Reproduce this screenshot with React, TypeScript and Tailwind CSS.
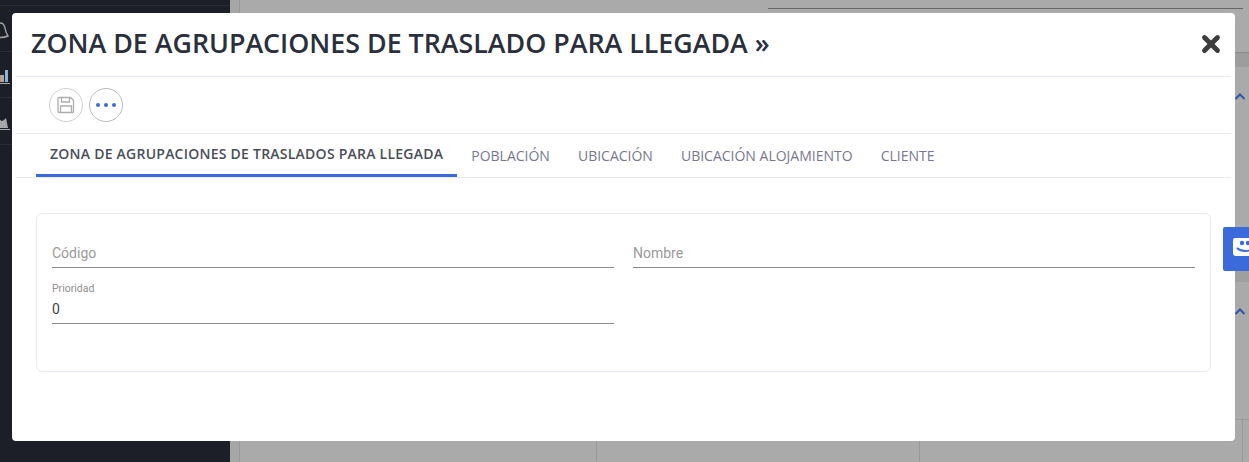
import { X } from 'lucide-react';

const tabs = ['POBLACIÓN', 'UBICACIÓN', 'UBICACIÓN ALOJAMIENTO', 'CLIENTE'];

function Field({ label, value, className }: { label: string; value?: string; className?: string }) {
  return (
    <div className={`relative h-[56px] border-b border-[#8c8c8c] font-['Roboto',sans-serif] ${className ?? ''}`}>
      {value ? (
        <>
          <div className="pt-[14px] text-[10.5px] leading-[14px] text-[#8f8f8f]">{label}</div>
          <div className="mt-[3px] text-sm leading-[20px] text-[#444]">{value}</div>
        </>
      ) : (
        <div className="pt-[31px] text-sm leading-[20px] text-[#9a9a9a]">{label}</div>
      )}
    </div>
  );
}

function Background() {
  return (
    <div className="flex h-[462px] w-[1249px] overflow-hidden bg-[#aaaaaa]">
      <aside className="w-[230px] shrink-0 bg-[#1c1f27]">
        <div className="mt-[5px] h-[47px] border-y border-[#2a2d36]" />
        <div className="h-[46px] border-b border-[#2a2d36]" />
        <div className="h-[47px] border-b border-[#2a2d36]" />
      </aside>
      <div className="w-[9px] shrink-0 bg-[#a6a6a6]" />
      <main className="flex h-full flex-1 flex-col border-l border-[#999]">
        <div className="ml-[528px] mr-[6px] mt-[8px] h-px bg-[#666]" />
        <div className="mt-[43px] h-[15px] border-t border-[#8a8a8a] bg-[#9d9d9d]" />
        <div className="mt-[204px] h-[11px] bg-[#9f9f9f]" />
        <div className="mt-[137px] flex flex-1 border-t border-[#999]">
          <div className="w-[357px] border-r border-[#999]" />
          <div className="w-[323px] border-r border-[#999]" />
          <div className="w-[323px] border-r border-[#999]" />
        </div>
      </main>
    </div>
  );
}

export default function App() {
  return (
    <div className="relative h-[462px] w-[1249px] overflow-hidden">
      <Background />

      {/* sidebar icons peeking out from behind the modal */}
      <svg className="absolute left-0 top-[20px]" width="12" height="20" viewBox="0 0 12 20" fill="none" stroke="#a3a3a3" strokeWidth="1.4">
        <path d="M0 3c3 0 4.500 2 5 5 .4 3 1 5 3 8-2 1-5 1.500-8 1.500" />
      </svg>
      <svg className="absolute left-0 top-[68px]" width="12" height="16" viewBox="0 0 12 16">
        <rect x="0" y="7" width="1" height="7" fill="#c98f6a" />
        <rect x="1" y="7" width="3" height="7" fill="#a8a8a8" />
        <rect x="5" y="2" width="3" height="12" fill="#8fb0d6" />
        <rect x="0" y="15" width="10" height="1" fill="#aaaaaa" />
      </svg>
      <svg className="absolute left-0 top-[116px]" width="12" height="16" viewBox="0 0 12 16">
        <path d="M0 4l2 1 2-1 2-2 2 10H0z" fill="#a8a8a8" />
        <rect x="0" y="13" width="10" height="1" fill="#aaaaaa" />
      </svg>

      {/* modal */}
      <div className="absolute left-[12px] top-[13px] flex h-[428px] w-[1223px] flex-col rounded-[4px] bg-white px-[4px]">
        <div className="flex h-[64px] shrink-0 items-center justify-between border-b border-[#e8eaf1] pb-[2px] pl-[15px] pr-[7px]">
          <h1 className="font-['Open_Sans',sans-serif] text-[26.8px] font-semibold leading-none text-[#2b2f3c]">
            ZONA DE AGRUPACIONES DE TRASLADO PARA LLEGADA »
          </h1>
          <X size={26} strokeWidth={4.5} className="text-[#3d3d3d]" />
        </div>

        <div className="flex h-[57px] shrink-0 items-center gap-[6px] border-b border-[#e8eaf1] pl-[33px]">
          <button className="flex h-[34px] w-[34px] items-center justify-center rounded-full border border-[#cfcfcf]">
            <svg width="18" height="18" viewBox="0 0 18 18" fill="none" stroke="#adadad" strokeWidth="1.3">
              <path d="M2 1.500h11.500l3 3v11a1 1 0 0 1-1 1H2a1 1 0 0 1-1-1v-13a1 1 0 0 1 1-1z" />
              <path d="M4.500 1.500v4.500h8v-4.500M3.500 16.500v-6.500h11v6.500" />
            </svg>
          </button>
          <button className="flex h-[34px] w-[34px] items-center justify-center gap-[4px] rounded-full border border-[#b9bcbf]">
            <span className="h-[4px] w-[4px] rounded-full bg-[#3b6bdb]" />
            <span className="h-[4px] w-[4px] rounded-full bg-[#3b6bdb]" />
            <span className="h-[4px] w-[4px] rounded-full bg-[#3b6bdb]" />
          </button>
        </div>

        <div className="flex h-[44px] shrink-0 border-b border-[#e8eaf1] pl-[20px] font-['Open_Sans',sans-serif] text-sm leading-none">
          <div className="flex h-[43px] items-center border-b-[3px] border-[#3b6bdb] px-[14px] font-semibold tracking-[0.24px] text-[#4a4e59]">
            ZONA DE AGRUPACIONES DE TRASLADOS PARA LLEGADA
          </div>
          {tabs.map((tab) => (
            <div key={tab} className="flex h-[43px] items-center px-[14px] text-[#77778f]">
              {tab}
            </div>
          ))}
        </div>

        <div className="mx-[20px] mt-[35px] h-[159px] rounded-[6px] border border-[#e8eaf1] px-[15px]">
          <div className="grid grid-cols-2 gap-x-[19px]">
            <Field label="Código" className="mt-[-2px]" />
            <Field label="Nombre" className="mt-[-2px]" />
            <Field label="Prioridad" value="0" />
          </div>
        </div>
      </div>

      {/* chat tab and chevrons on the page behind */}
      <div className="absolute left-[1223px] top-[227px] flex h-[44px] w-[26px] items-center overflow-hidden rounded-l-[2px] bg-[#3b6bdb] pl-[10px] pt-[1px]">
        <svg width="24" height="23" viewBox="0 0 24 23" className="shrink-0">
          <path d="M2 0h20a2 2 0 0 1 2 2v21l-7-5H3a3 3 0 0 1-3-3V2a2 2 0 0 1 2-2z" fill="#fff" />
          <circle cx="9" cy="5" r="2.200" fill="#3b6bdb" />
          <circle cx="15" cy="5" r="2.200" fill="#3b6bdb" />
          <path d="M4 10c4 4 12 4 17 0" stroke="#3b6bdb" strokeWidth="1.800" fill="none" />
        </svg>
      </div>
      <svg className="absolute left-[1235px] top-[92px]" width="10" height="8" viewBox="0 0 10 8" fill="none" stroke="#2f55a8" strokeWidth="2">
        <path d="M0.500 7l4.500-4.500 4.500 4.500" />
      </svg>
      <svg className="absolute left-[1235px] top-[307px]" width="10" height="8" viewBox="0 0 10 8" fill="none" stroke="#2f55a8" strokeWidth="2">
        <path d="M0.500 7l4.500-4.500 4.500 4.500" />
      </svg>
    </div>
  );
}
